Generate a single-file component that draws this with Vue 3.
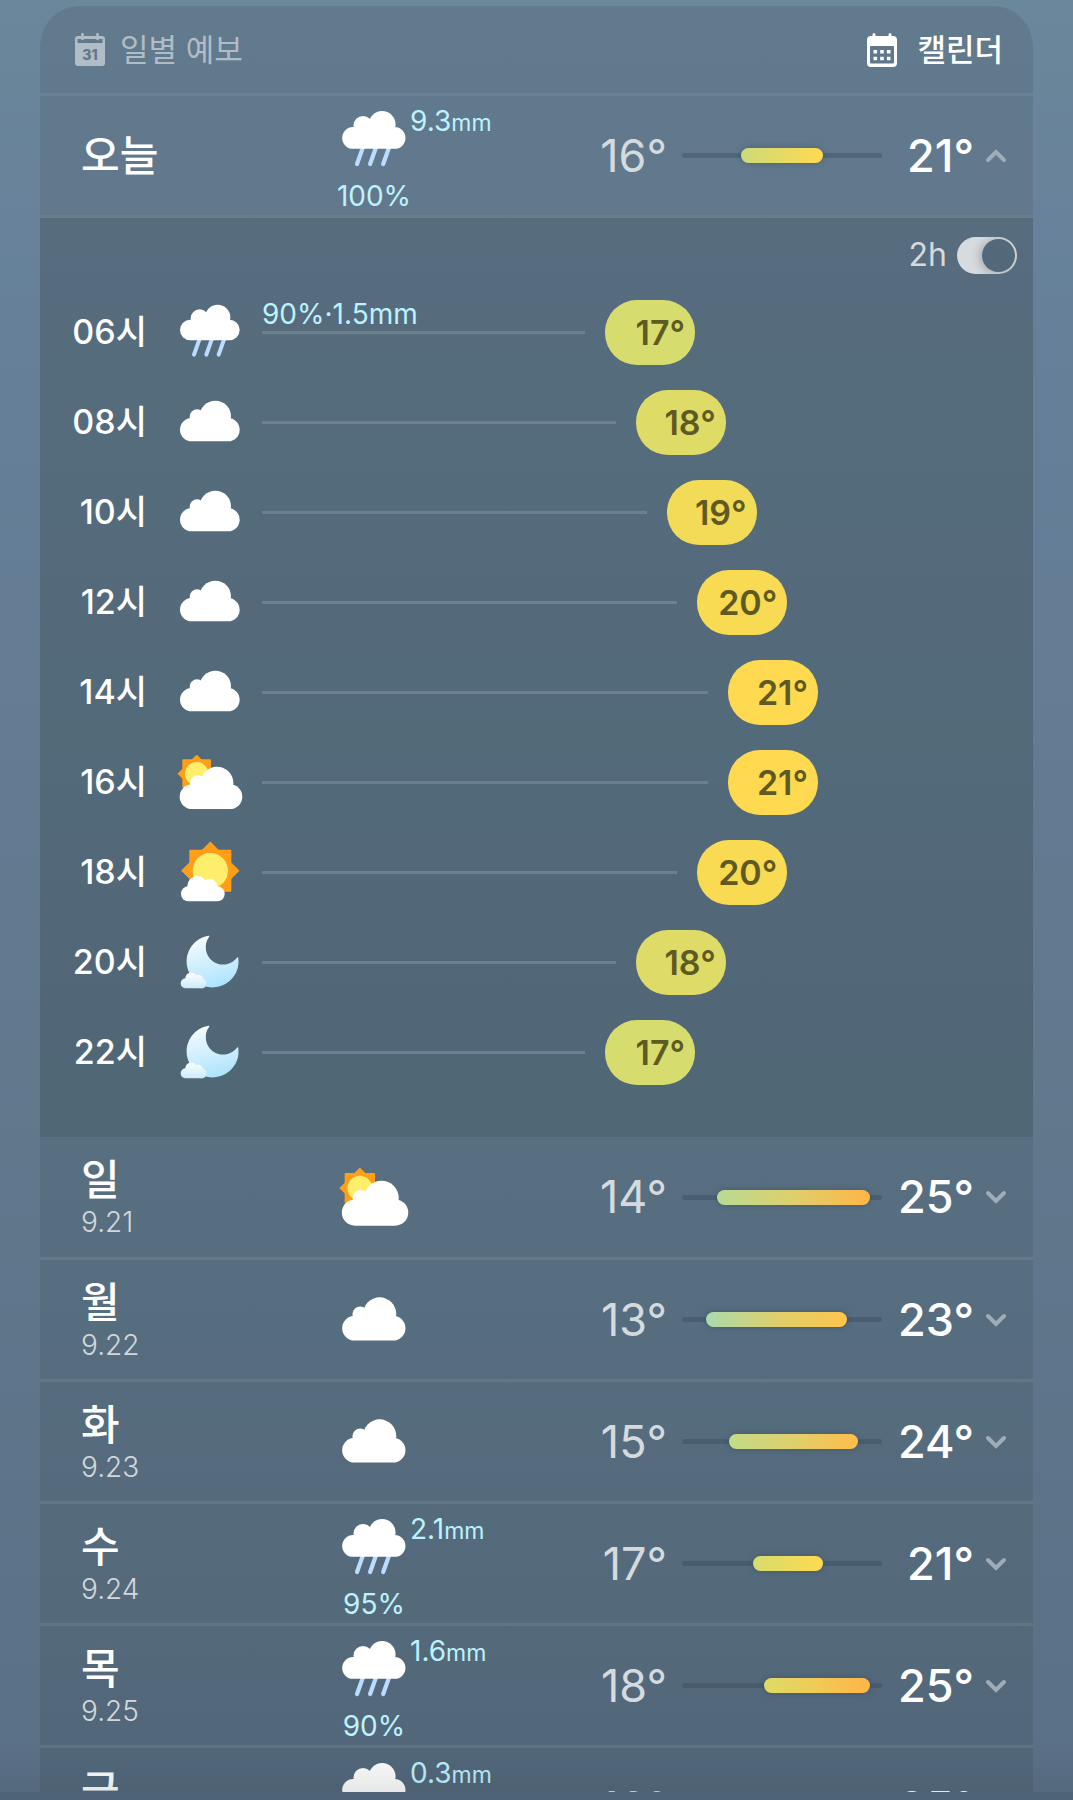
<script setup>
import { ref, h } from 'vue'

const hours = [
  { time: '06', icon: 'rain', temp: 17, precip: '90%·1.5mm' },
  { time: '08', icon: 'cloud', temp: 18 },
  { time: '10', icon: 'cloud', temp: 19 },
  { time: '12', icon: 'cloud', temp: 20 },
  { time: '14', icon: 'cloud', temp: 21 },
  { time: '16', icon: 'partly', temp: 21 },
  { time: '18', icon: 'sunny', temp: 20 },
  { time: '20', icon: 'moon', temp: 18 },
  { time: '22', icon: 'moon', temp: 17 },
]

const days = [
  { name: '일', date: '9.21', icon: 'partly', low: 14, high: 25 },
  { name: '월', date: '9.22', icon: 'cloud', low: 13, high: 23 },
  { name: '화', date: '9.23', icon: 'cloud', low: 15, high: 24 },
  { name: '수', date: '9.24', icon: 'rain', low: 17, high: 21, amount: '2.1', chance: '95%' },
  { name: '목', date: '9.25', icon: 'rain', low: 18, high: 25, amount: '1.6', chance: '90%' },
  { name: '금', date: '9.26', icon: 'rain', low: 16, high: 25, amount: '0.3', chance: '60%' },
]
const today = { name: '오늘', icon: 'rain', low: 16, high: 21, amount: '9.3', chance: '100%', open: true }

const twoHourly = ref(true)

const colors = {
  13: '#a9dbae', 14: '#b8db93', 15: '#c2db88', 16: '#ccdb7a', 17: '#d6dc6e', 18: '#dedb66',
  19: '#f2db56', 20: '#f8da53', 21: '#ffd950', 22: '#ffd04e', 23: '#ffc54c', 24: '#ffbd4a', 25: '#ffb547',
}

// Weekly scale spans 17 one-degree steps.
const barStyle = (d) => {
  const left = ((d.low - 11) / 17) * 100
  const right = ((d.high - 9) / 17) * 100
  const stops = [colors[d.low]]
  if (d.low < 20 && d.high > 22) stops.push(d.low < 16 ? '#dfcf6d' : '#f0ca57')
  stops.push(colors[d.high])
  return {
    left: left + '%',
    width: right - left + '%',
    background: `linear-gradient(90deg, ${stops.join(', ')})`,
  }
}
const lineStyle = (t) => ({ width: 42.8 + (t - 17) * 4.07 + '%' })

const c = (cx, cy, r, fill = '#fff') => h('circle', { cx, cy, r, fill })
const box = (x, y, width, height, rx, fill = '#fff') => h('rect', { x, y, width, height, rx, fill })
const star = (cx, cy, a, b) => [
  box(cx - a, cy - a, a * 2, a * 2, 3, '#ff9f17'),
  h('path', {
    d: `M${cx} ${cy - b}L${cx + b} ${cy}L${cx} ${cy + b}L${cx - b} ${cy}Z`,
    fill: '#ff9f17', stroke: '#ff9f17', 'stroke-width': 3, 'stroke-linejoin': 'round',
  }),
]
const drawings = {
  rain: () => [
    h('path', { d: 'M67 122L51 167M104 122L88 167M141 122L125 167', stroke: '#b9dcff', 'stroke-width': 12, 'stroke-linecap': 'round' }),
    c(68, 58, 27), c(122, 55, 38), box(9, 62, 179, 62, 31), box(50, 50, 90, 40, 0),
  ],
  cloud: () => [c(60, 83, 22), c(115, 82, 47), box(9, 87, 179, 70, 35), box(50, 80, 90, 30, 0)],
  partly: () => [
    ...star(59, 74, 43, 56), c(59, 74, 35, '#ffee6b'),
    c(62, 102, 23), c(120, 102, 49), box(8, 106, 188, 74, 37), box(50, 98, 90, 30, 0),
  ],
  sunny: () => [
    ...star(100, 95, 63, 86), c(100, 95, 53, '#ffee6b'),
    c(61, 141, 30), c(99, 142, 22), box(12, 142, 131, 45, 22), box(50, 135, 60, 30, 0),
  ],
  moon: () => [
    h('defs', null, [
      h('linearGradient', { id: 'night', gradientUnits: 'userSpaceOnUse', x1: 80, y1: 20, x2: 120, y2: 175 }, [
        h('stop', { offset: 0, 'stop-color': '#f6fbfe' }), h('stop', { offset: 1, 'stop-color': '#ade3fd' }),
      ]),
      h('linearGradient', { id: 'mist', gradientUnits: 'userSpaceOnUse', x1: 0, y1: 129, x2: 0, y2: 178 }, [
        h('stop', { offset: 0, 'stop-color': '#ffffff' }), h('stop', { offset: 1, 'stop-color': '#cbeafa' }),
      ]),
    ]),
    h('path', {
      d: 'M95 22A76 76 0 1 0 182 87A51 51 0 0 1 95 22Z', fill: 'url(#night)',
      stroke: 'url(#night)', 'stroke-width': 4, 'stroke-linejoin': 'round',
    }),
    h('path', {
      d: 'M27 178A15 15 0 0 1 25 148A18 18 0 0 1 58 139A14 14 0 0 1 78 149A15 15 0 0 1 71 178Z', fill: 'url(#mist)',
    }),
  ],
}
const WeatherIcon = (props) =>
  h('svg', { viewBox: '0 0 198 198', fill: 'none', 'aria-hidden': 'true' }, drawings[props.name]())
WeatherIcon.props = ['name']
</script>

<template>
  <div class="page">
    <main class="scroll">
      <section class="card">
        <header class="head">
          <h1 class="title">
            <svg class="cal" viewBox="0 0 30 34" aria-hidden="true">
              <path d="M3 3h24a3 3 0 0 1 3 3v24a3 3 0 0 1-3 3H3a3 3 0 0 1-3-3V6a3 3 0 0 1 3-3Z" fill="#b0bcc6" />
              <path d="M2.500 6h25v4h-25z" fill="#61788c" />
              <path d="M7.500 1v5M22.500 1v5" stroke="#b0bcc6" stroke-width="2.600" stroke-linecap="round" />
              <text x="15" y="27" text-anchor="middle" font-size="14" font-weight="800" fill="#61788c">31</text>
            </svg>
            일별 예보
          </h1>
          <button class="calendar" type="button">
            <svg class="cal" viewBox="0 0 30 34" aria-hidden="true">
              <rect x="0" y="3" width="30" height="31" rx="4" fill="#fff" />
              <path d="M7 1.500v4M23 1.500v4" stroke="#fff" stroke-width="3" stroke-linecap="round" />
              <rect x="3" y="13" width="24" height="17.500" rx="1" fill="#61788c" />
              <path d="M6.500 17h3.600v3.600H6.500zM13.200 17h3.600v3.600h-3.600zM19.900 17h3.600v3.600h-3.600zM6.500 23.700h3.600v3.600H6.500zM13.200 23.700h3.600v3.600h-3.600zM19.900 23.700h3.600v3.600h-3.600z" fill="#fff" />
            </svg>
            캘린더
          </button>
        </header>

        <template v-for="d in [today, ...days]" :key="d.name">
          <button class="day" type="button" :aria-expanded="!!d.open">
            <span class="when">
              <span class="name">{{ d.name }}</span>
              <span v-if="d.date" class="date">{{ d.date }}</span>
            </span>
            <span class="sky" :class="{ wet: d.amount }">
              <WeatherIcon class="big" :name="d.icon" />
              <span v-if="d.amount" class="amount">{{ d.amount }}<small>mm</small></span>
              <span v-if="d.chance" class="chance">{{ d.chance }}</span>
            </span>
            <span class="low">{{ d.low }}°</span>
            <span class="track"><span class="fill" :style="barStyle(d)"></span></span>
            <span class="high">{{ d.high }}°</span>
            <svg class="chev" :class="{ up: d.open }" viewBox="0 0 22 14" aria-hidden="true">
              <path d="M3 3l8 8 8-8" fill="none" stroke="#a0adb8" stroke-width="4" stroke-linecap="round" />
            </svg>
          </button>

          <div v-if="d.open" class="hourly">
            <label class="switch">
              <span>2h</span>
              <input v-model="twoHourly" type="checkbox" role="switch" />
            </label>
            <ol class="hours">
              <li v-for="x in hours" :key="x.time" class="hour">
                <span class="time">{{ x.time }}시</span>
                <WeatherIcon class="small" :name="x.icon" />
                <div class="plot">
                  <div class="line" :style="lineStyle(x.temp)">
                    <span v-if="x.precip" class="precip">{{ x.precip }}</span>
                  </div>
                  <span class="pill" :style="{ background: colors[x.temp] }">{{ x.temp }}°</span>
                </div>
              </li>
            </ol>
          </div>
        </template>
      </section>
    </main>
    <footer class="bar"></footer>
  </div>
</template>

<style>
body {
  margin: 0;
}
</style>

<style scoped>
.page {
  display: flex;
  flex-direction: column;
  height: 100vh;
  overflow: hidden;
  color: #fff;
  font-family: Inter, 'Noto Sans CJK KR', sans-serif;
  background: linear-gradient(180deg, #6b879a 0%, #66809a 18%, #61788d 60%, #5a7086 100%);
}
.page * {
  box-sizing: border-box;
}
.scroll {
  position: relative;
  flex: 1;
  min-height: 0;
  padding: 6px 40px 0;
  overflow: hidden;
}
.scroll::after {
  content: '';
  position: absolute;
  left: 0;
  right: 0;
  bottom: 0;
  height: 48px;
  background: linear-gradient(180deg, rgba(50, 60, 65, 0), rgba(50, 60, 65, 0.12));
  pointer-events: none;
}
.bar {
  flex: none;
  height: 8px;
  background: #4e6476;
}
.card {
  border-radius: 40px 40px 0 0;
  overflow: hidden;
  background: linear-gradient(180deg, #627a8c 0, #61788d 216px, #586f82 1131px, #546a7b 1616px, #51667a 1800px);
}
button {
  margin: 0;
  border: 0;
  padding: 0;
  background: none;
  color: inherit;
  font: inherit;
  text-align: left;
}
.head {
  display: flex;
  align-items: center;
  justify-content: space-between;
  height: 87px;
  padding: 0 30px 0 35px;
}
.title,
.calendar {
  display: flex;
  align-items: center;
  margin: 0;
  font-size: 31px;
  line-height: 40px;
  font-weight: 400;
}
.title {
  gap: 15px;
  color: #b0bcc6;
}
.calendar {
  gap: 20px;
  font-weight: 500;
}
.cal {
  width: 30px;
  height: 34px;
}
.day {
  display: grid;
  grid-template-columns: 258fr 236fr 92px 215fr 92px 33px;
  align-items: center;
  width: 100%;
  height: 122px;
  padding: 0 26px 0 41px;
  border-top: 3px solid rgba(130, 155, 160, 0.26);
}
.when {
  display: flex;
  flex-direction: column;
}
.name {
  font-size: 42px;
  line-height: 50px;
  font-weight: 500;
}
.date {
  font-size: 28px;
  line-height: 34px;
  font-weight: 300;
  color: #d2d8de;
}
.sky {
  display: grid;
  grid-template-columns: 70px auto;
  justify-content: start;
  column-gap: 1px;
  color: #bdf2ff;
  font-size: 28px;
  line-height: 32px;
}
.wet {
  row-gap: 5px;
  padding-top: 6px;
}
.big {
  width: 70px;
  height: 70px;
}
.amount small {
  font-size: 23px;
}
.chance {
  justify-self: center;
}
.low,
.high {
  font-size: 45px;
  line-height: 52px;
  text-align: right;
}
.low {
  color: #d5dadf;
}
.high {
  font-weight: 500;
}
.track {
  position: relative;
  height: 5px;
  margin-left: 15px;
  border-radius: 3px;
  background: rgba(50, 70, 85, 0.36);
}
.fill {
  position: absolute;
  top: -5px;
  height: 15px;
  border-radius: 8px;
  box-shadow: 0 0 6px rgba(40, 60, 80, 0.4);
}
.chev {
  justify-self: end;
  width: 22px;
  height: 14px;
}
.up {
  transform: rotate(180deg);
}
.hourly {
  padding: 0 16px 40px 0;
  border-top: 3px solid rgba(130, 155, 160, 0.4);
  background: rgba(60, 82, 88, 0.28);
}
.hourly + .day {
  border-top: 0;
  height: 120px;
}
.switch {
  display: flex;
  align-items: center;
  justify-content: flex-end;
  gap: 10px;
  height: 69px;
  padding-top: 5px;
  font-size: 32px;
  line-height: 40px;
  color: #d5dadf;
}
.switch input {
  appearance: none;
  display: flex;
  justify-content: flex-start;
  width: 60px;
  height: 37px;
  margin: 0;
  padding: 2px;
  border-radius: 19px;
  background: #d6dbdf;
  overflow: hidden;
}
.switch input:checked {
  justify-content: flex-end;
}
.switch input::before {
  content: '';
  width: 33px;
  height: 33px;
  border-radius: 50%;
  background: #52697b;
  box-shadow: -2px 1px 10px rgba(0, 0, 0, 0.25);
}
.hours {
  margin: 0;
  padding: 0;
  list-style: none;
}
.hour {
  display: flex;
  align-items: center;
  height: 90px;
}
.time {
  width: 107px;
  font-size: 34px;
  line-height: 44px;
  font-weight: 500;
  text-align: right;
}
.small {
  width: 66px;
  height: 66px;
  margin: 0 19px 0 30px;
}
.plot {
  flex: 1;
  display: flex;
  align-items: center;
}
.line {
  position: relative;
  flex: none;
  height: 3px;
  background: #6c808f;
}
.precip {
  position: absolute;
  left: 0;
  bottom: 4px;
  color: #bdf2ff;
  font-size: 28px;
  line-height: 32px;
  white-space: nowrap;
}
.pill {
  width: 90px;
  height: 65px;
  margin-left: 20px;
  padding-right: 10px;
  border-radius: 32px;
  color: #5f5a24;
  font-size: 34px;
  line-height: 65px;
  font-weight: 600;
  text-align: right;
}
</style>
